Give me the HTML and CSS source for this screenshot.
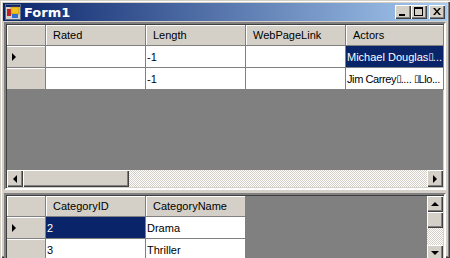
FILE: index.html
```html
<!DOCTYPE html>
<html>
<head>
<meta charset="utf-8">
<link rel="stylesheet" href="styles.css">
</head>
<body>
<div class="window">
  <div class="titlebar">
    <svg class="appicon" width="16" height="16" viewBox="0 0 16 16">
      <rect x="0.5" y="0.5" width="15" height="15" fill="#D4D0C8" stroke="#5a6a8a"/>
      <rect x="1" y="1" width="14" height="2" fill="#0A246A"/>
      <rect x="2" y="5" width="4" height="7" fill="#c02020"/>
      <rect x="6" y="3" width="8" height="7" fill="#f0c020" stroke="#a07010" stroke-width="0.5"/>
      <rect x="7" y="10" width="6" height="4" fill="#3070d0"/>
    </svg>
    <span class="title">Form1</span>
    <div class="tbuttons">
      <div class="tbtn"><span class="min"></span></div>
      <div class="tbtn"><span class="max"></span></div>
      <div class="tbtn close"><svg width="8" height="7" viewBox="0 0 8 7"><path d="M0 0h2l2 2.5L6 0h2L5 3.5 8 7H6L4 4.5 2 7H0l3-3.5z" fill="#000"/></svg></div>
    </div>
  </div>
  <div class="content">
    <div class="grid grid1">
      <div class="rows">
        <div class="row header">
          <div class="rh"></div>
          <div class="hc">Rated</div>
          <div class="hc">Length</div>
          <div class="hc">WebPageLink</div>
          <div class="hc">Actors</div>
        </div>
        <div class="row">
          <div class="rh"><span class="arrow"></span></div>
          <div class="c"></div>
          <div class="c">-1</div>
          <div class="c"></div>
          <div class="c sel">Michael Douglas<span class="box">▯</span>...</div>
        </div>
        <div class="row">
          <div class="rh"></div>
          <div class="c"></div>
          <div class="c">-1</div>
          <div class="c"></div>
          <div class="c tight">Jim Carrey<span class="box">▯</span>.... <span class="box">▯</span>Llo...</div>
        </div>
      </div>
      <div class="hscroll">
        <div class="sbtn"><span class="tri left"></span></div>
        <div class="thumb"></div>
        <div class="track"></div>
        <div class="sbtn"><span class="tri right"></span></div>
      </div>
    </div>
    <div class="grid grid2">
      <div class="rows">
        <div class="row header">
          <div class="rh"></div>
          <div class="hc">CategoryID</div>
          <div class="hc">CategoryName</div>
        </div>
        <div class="row">
          <div class="rh"><span class="arrow"></span></div>
          <div class="c sel">2</div>
          <div class="c">Drama</div>
        </div>
        <div class="row">
          <div class="rh"></div>
          <div class="c">3</div>
          <div class="c">Thriller</div>
        </div>
      </div>
      <div class="vscroll">
        <div class="sbtn"><span class="tri up"></span></div>
        <div class="vthumb"></div>
        <div class="vtrack"></div>
        <div class="sbtn"><span class="tri down"></span></div>
      </div>
    </div>
  </div>
</div>
</body>
</html>
```
FILE: styles.css
```css
html, body {
  margin: 0;
  padding: 0;
  background: #D4D0C8;
}
.window {
  width: 450px;
  height: 258px;
  box-sizing: border-box;
  background: #D4D0C8;
  padding: 3px;
  box-shadow: inset 1px 1px 0 #D4D0C8, inset 2px 2px 0 #fff, inset -1px -1px 0 #404040, inset -2px -2px 0 #808080;
  display: flex;
  flex-direction: column;
  font-family: "Liberation Sans", Arial, sans-serif;
  font-size: 11px;
}
.titlebar {
  height: 18px;
  background: linear-gradient(to right, #0A246A, #A6CAF0);
  display: flex;
  align-items: center;
  padding-left: 2px;
  flex-shrink: 0;
}
.appicon { display: block; }
.title {
  color: #fff;
  font-weight: bold;
  font-size: 13px;
  font-family: "DejaVu Sans", sans-serif;
  margin-left: 3px;
}
.tbuttons {
  margin-left: auto;
  display: flex;
  margin-right: 2px;
}
.tbtn {
  width: 16px;
  height: 14px;
  box-sizing: border-box;
  background: #D4D0C8;
  box-shadow: inset 1px 1px 0 #fff, inset -1px -1px 0 #404040, inset -2px -2px 0 #808080;
  position: relative;
}
.tbtn.close { margin-left: 2px; }
.min {
  position: absolute;
  left: 4px;
  top: 9px;
  width: 6px;
  height: 2px;
  background: #000;
}
.max {
  position: absolute;
  left: 3px;
  top: 2px;
  width: 9px;
  height: 9px;
  box-sizing: border-box;
  border: 1px solid #000;
  border-top-width: 2px;
}
.close svg {
  position: absolute;
  left: 4px;
  top: 3px;
}
.content {
  flex: 1;
  display: flex;
  flex-direction: column;
  padding: 1px 1px 0 1px;
  gap: 3px;
}
.grid {
  background: #808080;
  box-sizing: border-box;
  border: 2px solid;
  border-color: #808080 #fff #fff #808080;
  box-shadow: inset 1px 1px 0 #404040, inset -1px -1px 0 #D4D0C8;
  padding: 1px;
  display: flex;
  overflow: hidden;
}
.grid1 {
  height: 168px;
  flex-direction: column;
}
.grid2 {
  flex: 1;
  flex-direction: row;
}
.rows {
  flex: 1;
  display: flex;
  flex-direction: column;
  min-width: 0;
}
.row {
  display: flex;
  height: 22px;
  flex-shrink: 0;
}
.row.header { height: 21px; }
.rh, .hc, .c {
  box-sizing: border-box;
  flex-shrink: 0;
  white-space: pre;
  overflow: hidden;
  display: flex;
  align-items: center;
}
.rh {
  width: 39px;
  background: #D4D0C8;
  border-right: 1px solid #808080;
  border-bottom: 1px solid #808080;
  box-shadow: inset 0 1px 0 #fff;
  padding-left: 5px;
}
.header .rh { box-shadow: inset 1px 1px 0 #fff; }
.hc {
  width: 100px;
  background: #D4D0C8;
  border-right: 1px solid #808080;
  border-bottom: 1px solid #808080;
  box-shadow: inset 1px 1px 0 #fff;
  padding-left: 7px;
}
.c {
  width: 100px;
  background: #fff;
  border-right: 1px solid #808080;
  border-bottom: 1px solid #808080;
  padding-left: 1px;
  color: #000;
}
.c.tight { letter-spacing: -0.4px; }
.c.sel {
  background: #0A246A;
  color: #fff;
}
.box {
  font-size: 10px;
  font-family: "DejaVu Sans", sans-serif;
  letter-spacing: -2px;
  margin-right: 1px;
}
.grid1 .c:last-child, .grid1 .hc:last-child { width: 98px; }
.arrow {
  width: 0;
  height: 0;
  border-top: 4px solid transparent;
  border-bottom: 4px solid transparent;
  border-left: 4px solid #000;
}
.hscroll {
  margin-top: auto;
  height: 17px;
  display: flex;
  flex-shrink: 0;
}
.sbtn {
  width: 16px;
  height: 16px;
  flex-shrink: 0;
  background: #D4D0C8;
  box-sizing: border-box;
  box-shadow: inset 1px 1px 0 #fff, inset -1px -1px 0 #404040, inset -2px -2px 0 #808080;
  display: flex;
  align-items: center;
  justify-content: center;
}
.hscroll .sbtn { height: 17px; }
.thumb {
  width: 106px;
  background: #D4D0C8;
  box-shadow: inset 1px 1px 0 #fff, inset -1px -1px 0 #404040, inset -2px -2px 0 #808080;
}
.track, .vtrack {
  flex: 1;
  background-color: #fff;
  background-image: repeating-conic-gradient(#D4D0C8 0 25%, #fff 0 50%);
  background-size: 2px 2px;
}
.vscroll {
  width: 16px;
  display: flex;
  flex-direction: column;
  flex-shrink: 0;
}
.vthumb {
  height: 16px;
  background: #D4D0C8;
  box-shadow: inset 1px 1px 0 #fff, inset -1px -1px 0 #404040, inset -2px -2px 0 #808080;
}
.tri { width: 0; height: 0; }
.tri.left { border-top: 4px solid transparent; border-bottom: 4px solid transparent; border-right: 4px solid #000; }
.tri.right { border-top: 4px solid transparent; border-bottom: 4px solid transparent; border-left: 4px solid #000; }
.tri.up { border-left: 4px solid transparent; border-right: 4px solid transparent; border-bottom: 4px solid #000; }
.tri.down { border-left: 4px solid transparent; border-right: 4px solid transparent; border-top: 4px solid #000; }
```
